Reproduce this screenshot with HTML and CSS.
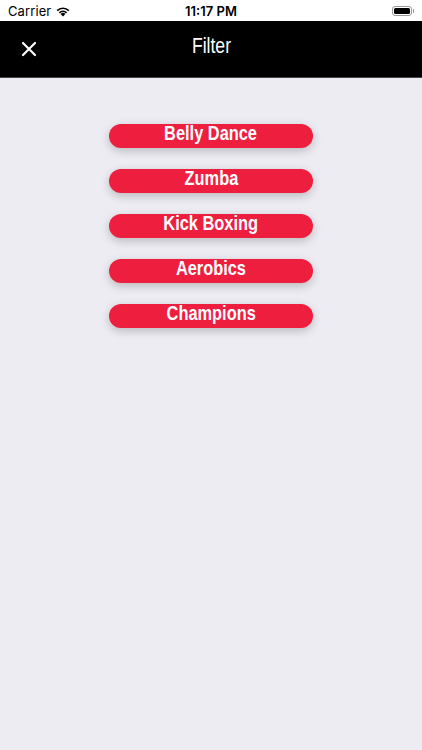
FILE: index.html
```html
<!DOCTYPE html>
<html lang="en">
<head>
  <meta charset="UTF-8">
  <meta name="viewport" content="width=device-width, initial-scale=1.0">
  <title>Filter</title>
  <link rel="stylesheet" href="styles.css">
</head>
<body>
  <div class="status-bar">
    <div class="carrier">
      Carrier
      <svg class="wifi" width="16" height="12" viewBox="0 0 16 12">
        <path d="M8 11.5 L5.6 9 A3.4 3.4 0 0 1 10.4 9 Z" fill="#000"/>
        <path d="M3.8 7.2 A6 6 0 0 1 12.2 7.2 L11 8.4 A4.3 4.3 0 0 0 5 8.4 Z" fill="#000"/>
        <path d="M1.6 5 A9.2 9.2 0 0 1 14.4 5 L13.2 6.2 A7.5 7.5 0 0 0 2.8 6.2 Z" fill="#000"/>
      </svg>
    </div>
    <div class="clock">11:17 PM</div>
    <div class="battery">
      <span class="battery-body"><span class="battery-fill"></span></span>
      <span class="battery-cap"></span>
    </div>
  </div>

  <div class="nav-bar">
    <svg class="close" width="16" height="16" viewBox="0 0 16 16">
      <path d="M2 2 L14 14 M14 2 L2 14" stroke="#fff" stroke-width="2.2" stroke-linecap="round"/>
    </svg>
    <div class="nav-title"><span>Filter</span></div>
  </div>

  <div class="content">
    <div class="filter-list">
      <button class="filter-btn"><span>Belly Dance</span></button>
      <button class="filter-btn"><span>Zumba</span></button>
      <button class="filter-btn"><span>Kick Boxing</span></button>
      <button class="filter-btn"><span>Aerobics</span></button>
      <button class="filter-btn"><span>Champions</span></button>
    </div>
  </div>
</body>
</html>
```

FILE: styles.css
```css
body {
  margin: 0;
  padding: 0;
  width: 422px;
  height: 750px;
  display: flex;
  flex-direction: column;
  font-family: 'Liberation Sans', Arial, sans-serif;
  background-color: #ececf2;
  overflow: hidden;
}

.status-bar {
  height: 21px;
  background-color: #fff;
  display: flex;
  align-items: center;
  justify-content: space-between;
  padding: 0 8px;
  font-size: 14px;
  color: #000;
  position: relative;
}

.carrier {
  display: flex;
  align-items: center;
  gap: 4px;
  font-family: 'Inter', sans-serif;
  font-size: 13px;
  letter-spacing: 0.1px;
}

.clock {
  position: absolute;
  left: 0;
  right: 0;
  text-align: center;
  font-family: 'Inter', sans-serif;
  font-weight: 600;
  font-size: 13px;
}

.battery {
  display: flex;
  align-items: center;
  gap: 1px;
}

.battery-body {
  width: 20px;
  height: 10px;
  border: 1px solid #999;
  border-radius: 3px;
  padding: 1px;
  box-sizing: border-box;
  display: flex;
}

.battery-fill {
  flex: 1;
  background-color: #000;
  border-radius: 1.5px;
}

.battery-cap {
  width: 1.5px;
  height: 4px;
  background-color: #999;
  border-radius: 0 1px 1px 0;
}

.nav-bar {
  height: 56px;
  background-color: #000;
  border-bottom: 1px solid #444;
  display: flex;
  align-items: center;
  position: relative;
}

.close {
  margin-left: 21px;
  margin-top: 0;
}

.nav-title {
  position: absolute;
  left: 0;
  right: 0;
  top: 12px;
  text-align: center;
  color: #fff;
  font-family: 'Liberation Sans', Arial, sans-serif;
  font-size: 22px;
}

.nav-title span {
  display: inline-block;
  transform: scaleX(0.8);
}

.content {
  flex: 1;
  background-color: #ececf2;
}

.filter-list {
  display: flex;
  flex-direction: column;
  align-items: center;
  gap: 21px;
  padding-top: 46px;
}

.filter-btn {
  width: 204px;
  height: 24px;
  border: none;
  border-radius: 12px;
  background-color: #ee1e3f;
  color: #fff;
  padding: 0;
  box-shadow: 0 3px 10px rgba(0, 0, 0, 0.22);
  font-family: 'Liberation Sans', Arial, sans-serif;
  font-weight: bold;
  font-size: 21px;
  line-height: 20px;
  display: flex;
  justify-content: center;
  align-items: flex-start;
}

.filter-btn span {
  display: inline-block;
  transform: scaleX(0.78);
  margin-top: -1px;
}
```
